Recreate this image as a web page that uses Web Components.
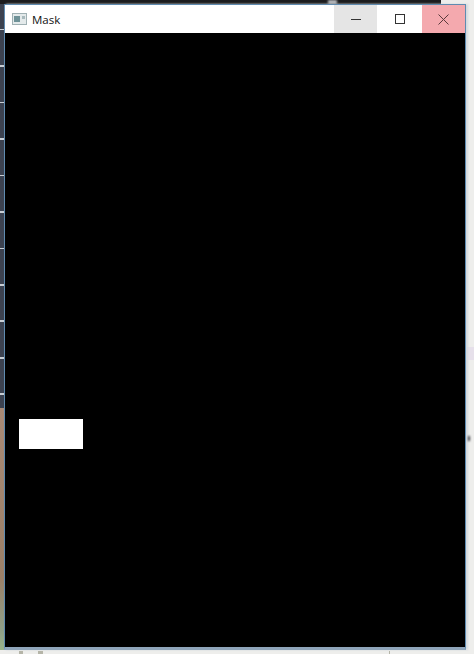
<!DOCTYPE html>
<html>
<head>
<meta charset="utf-8">
<title>Mask</title>
<style>
  html, body { margin: 0; padding: 0; height: 100%; overflow: hidden; }
  body { font-family: "Open Sans", "Liberation Sans", sans-serif; }
</style>
</head>
<body>
<desktop-backdrop>
  <mask-window title-text="Mask">
    <mask-blob></mask-blob>
  </mask-window>
</desktop-backdrop>

<script>
class DesktopBackdrop extends HTMLElement {
  constructor() {
    super();
    this.shadowDOM = this.attachShadow({ mode: "open" });
  }

  connectedCallback() {
    this.shadowDOM.innerHTML = `
      <style>
        :host {
          display: block;
          width: 474px;
          height: 654px;
          box-sizing: border-box;
          padding: 4px 8px 4px 4px;
          background:
            linear-gradient(#1c1c1e, #1c1c1e) 0 0 / 441px 4px no-repeat,
            repeating-linear-gradient(#3c4250 0 34.5px, #c9ced4 34.5px 36.5px) 0 -6px / 4px 414px no-repeat,
            linear-gradient(#a98a76, #9b8068 70%, #8fa088 92%, #9ab48a 100%) 0 408px / 4px 242px no-repeat,
            #eeeeec;
        }
        .frame { position: relative; height: 100%; }
        .mark { position: absolute; }
        .tick { bottom: -4px; height: 3px; background: #b5b5a8; filter: blur(.6px); }
        .patch { left: 462px; top: 343px; width: 8px; height: 13px; background: #e6e0ea; }
        .glare { left: 324px; top: -4px; width: 9px; height: 4px; background: #b9bcc0; filter: blur(1px); }
        .spot { left: 461px; top: 432px; width: 5px; height: 5px; background: #4a4a50; filter: blur(1px); }
      </style>
      <div class="frame">
        <span class="mark patch"></span>
        <span class="mark glare"></span>
        <span class="mark spot"></span>
        <slot></slot>
        <span class="mark tick" style="left:15px;width:4px"></span>
        <span class="mark tick" style="left:34px;width:5px"></span>
        <span class="mark tick" style="left:385px;width:1px"></span>
      </div>
    `;
  }
}
customElements.define("desktop-backdrop", DesktopBackdrop);

class MaskWindow extends HTMLElement {
  constructor() {
    super();
    this.shadowDOM = this.attachShadow({ mode: "open" });
  }

  connectedCallback() {
    const title = this.getAttribute("title-text") || "";
    this.shadowDOM.innerHTML = `
      <style>
        :host {
          display: flex;
          flex-direction: column;
          position: relative;
          height: 100%;
          box-sizing: border-box;
          border: 1px solid #5f8bb0;
          border-bottom-width: 3px;
          border-bottom-color: #8fa5ba;
          background: #fff;
          box-shadow: 2px 0 2px #d3d9de;
        }
        .bar {
          flex: none;
          height: 28px;
          display: flex;
          align-items: stretch;
          background: #fff;
          color: #111;
          font-size: 11.5px;
        }
        .title {
          flex: 1;
          display: flex;
          align-items: center;
          gap: 5px;
          padding-left: 7px;
        }
        .btn {
          width: 45px;
          display: flex;
          align-items: center;
          justify-content: center;
        }
        .min { background: #e5e5e5; width: 43px; }
        .close { background: #f4a9ae; width: 43px; }
        .content {
          flex: 1;
          position: relative;
          background: #000;
        }
      </style>
      <div class="bar">
        <div class="title">
          <svg width="15" height="12" viewBox="0 0 15 12">
            <rect x="0.5" y="0.5" width="14" height="11" fill="#e4eaeb" stroke="#9fb0b3"/>
            <rect x="2" y="3" width="6" height="6" fill="#6f9298"/>
            <rect x="10" y="3" width="3" height="3" fill="#a9babd"/>
          </svg>
          <span>${title}</span>
        </div>
        <div class="btn min">
          <svg width="10" height="10" viewBox="0 0 10 10"><path d="M0 5.5H10" stroke="#333" fill="none"/></svg>
        </div>
        <div class="btn">
          <svg width="10" height="10" viewBox="0 0 10 10"><rect x="0.5" y="0.5" width="9" height="9" stroke="#333" fill="none"/></svg>
        </div>
        <div class="btn close">
          <svg width="11" height="11" viewBox="0 0 11 11"><path d="M0.5 0.5L10.5 10.5M10.5 0.5L0.5 10.5" stroke="#5a3a3c" fill="none"/></svg>
        </div>
      </div>
      <div class="content"><slot></slot></div>
    `;
  }
}
customElements.define("mask-window", MaskWindow);

class MaskBlob extends HTMLElement {
  constructor() {
    super();
    this.shadowDOM = this.attachShadow({ mode: "open" });
  }

  connectedCallback() {
    // white region of the mask, placed on the black image
    this.shadowDOM.innerHTML = `
      <style>
        :host {
          position: absolute;
          left: 14px;
          top: 386px;
          width: 64px;
          height: 30px;
          background: #fff;
        }
      </style>
    `;
  }
}
customElements.define("mask-blob", MaskBlob);
</script>
</body>
</html>
